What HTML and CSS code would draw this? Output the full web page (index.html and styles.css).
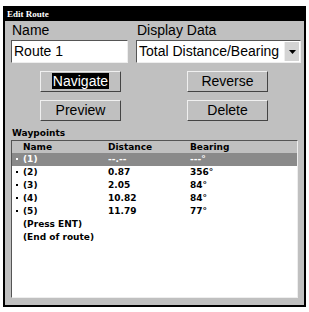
FILE: index.html
```html
<!DOCTYPE html>
<html lang="en">
<head>
    <meta charset="UTF-8">
    <title>Edit Route</title>
    <link rel="stylesheet" href="styles.css">
</head>
<body>
    <div class="window">
        <div class="titlebar">Edit Route</div>
        <div class="content">
            <div class="fields">
                <div class="field">
                    <div class="label">Name</div>
                    <div class="textbox">Route 1</div>
                </div>
                <div class="field">
                    <div class="label">Display Data</div>
                    <div class="textbox select">
                        <span>Total Distance/Bearing</span>
                        <span class="arrow">
                            <svg width="7" height="4" viewBox="0 0 7 4"><path d="M0 0h7L3.5 4z" fill="#000"/></svg>
                        </span>
                    </div>
                </div>
            </div>

            <div class="buttons">
                <div class="btn"><span class="focus">Navigate</span></div>
                <div class="btn">Reverse</div>
                <div class="btn">Preview</div>
                <div class="btn">Delete</div>
            </div>

            <div class="section">Waypoints</div>
            <div class="list">
                <div class="row head">
                    <span class="c-name">Name</span>
                    <span class="c-dist">Distance</span>
                    <span class="c-bear">Bearing</span>
                </div>
                <div class="row selected">
                    <span class="c-name"><i class="dot"></i>(1)</span>
                    <span class="c-dist">--.--</span>
                    <span class="c-bear">---°</span>
                </div>
                <div class="row">
                    <span class="c-name"><i class="dot"></i>(2)</span>
                    <span class="c-dist">0.87</span>
                    <span class="c-bear">356°</span>
                </div>
                <div class="row">
                    <span class="c-name"><i class="dot"></i>(3)</span>
                    <span class="c-dist">2.05</span>
                    <span class="c-bear">84°</span>
                </div>
                <div class="row">
                    <span class="c-name"><i class="dot"></i>(4)</span>
                    <span class="c-dist">10.82</span>
                    <span class="c-bear">84°</span>
                </div>
                <div class="row">
                    <span class="c-name"><i class="dot"></i>(5)</span>
                    <span class="c-dist">11.79</span>
                    <span class="c-bear">77°</span>
                </div>
                <div class="row">
                    <span class="c-name">(Press ENT)</span>
                </div>
                <div class="row">
                    <span class="c-name">(End of route)</span>
                </div>
            </div>
        </div>
    </div>
</body>
</html>
```

FILE: styles.css
```css
body {
    margin: 0;
    background: #fff;
    font-family: 'Liberation Sans', Arial, sans-serif;
}
.window {
    margin: 6px 0 0 3px;
    width: 299px;
    height: 297px;
    border: 2px solid #000;
    background: #c0c0c0;
    display: flex;
    flex-direction: column;
}
.titlebar {
    background: #000;
    color: #fff;
    font-family: 'Liberation Serif', serif;
    font-weight: bold;
    font-size: 9px;
    height: 13px;
    line-height: 13px;
    padding-left: 2px;
}
.content {
    padding: 0 4px 0 6px;
    display: flex;
    flex-direction: column;
    flex: 1;
}
.fields {
    display: grid;
    grid-template-columns: 117px 165px;
    column-gap: 8px;
    margin-top: 1px;
}
.label {
    font-size: 14px;
    line-height: 16px;
    color: #000;
    padding-left: 1px;
}
.textbox {
    margin-top: 2px;
    border: 1px solid;
    border-color: #555 #eee #eee #555;
    background: #fff;
    font-size: 14px;
    padding-left: 2px;
    box-sizing: border-box;
    height: 23px;
    line-height: 21px;
}
.select {
    display: flex;
    justify-content: space-between;
    padding-right: 1px;
}
.arrow {
    width: 14px;
    height: 19px;
    margin-top: 1px;
    background: #d4d4d4;
    border-left: 1px solid #eee;
    display: flex;
    align-items: center;
    justify-content: center;
}
.buttons {
    display: grid;
    grid-template-columns: 81px 81px;
    justify-content: start;
    column-gap: 66px;
    row-gap: 8px;
    margin: 8px 0 0 29px;
}
.btn {
    height: 21px;
    box-sizing: border-box;
    border: 1px solid;
    border-color: #f0f0f0 #444 #444 #f0f0f0;
    font-size: 14px;
    line-height: 19px;
    text-align: center;
}
.focus {
    background: #000;
    color: #fff;
    padding: 0 1px;
}
.section {
    font-family: 'DejaVu Sans', Verdana, sans-serif;
    font-weight: bold;
    font-size: 9px;
    margin-top: 7px;
    padding-left: 1px;
    height: 11px;
    line-height: 11px;
}
.list {
    margin-top: 1px;
    width: 287px;
    height: 158px;
    box-sizing: border-box;
    border: 1px solid;
    border-color: #555 #eee #eee #555;
    background: #fff;
    font-family: 'DejaVu Sans', Verdana, sans-serif;
    font-weight: bold;
    font-size: 9px;
}
.row {
    display: flex;
    height: 13px;
    line-height: 13px;
}
.head {
    background: #c0c0c0;
    height: 12px;
    line-height: 12px;
}
.selected {
    background: #8a8a8a;
    color: #fff;
}
.c-name {
    width: 85px;
    padding-left: 11px;
    position: relative;
}
.c-dist {
    width: 82px;
}
.dot {
    position: absolute;
    left: 4px;
    top: 5px;
    width: 2px;
    height: 2px;
    background: currentColor;
}
.selected .dot {
    background: #fff;
}
```
